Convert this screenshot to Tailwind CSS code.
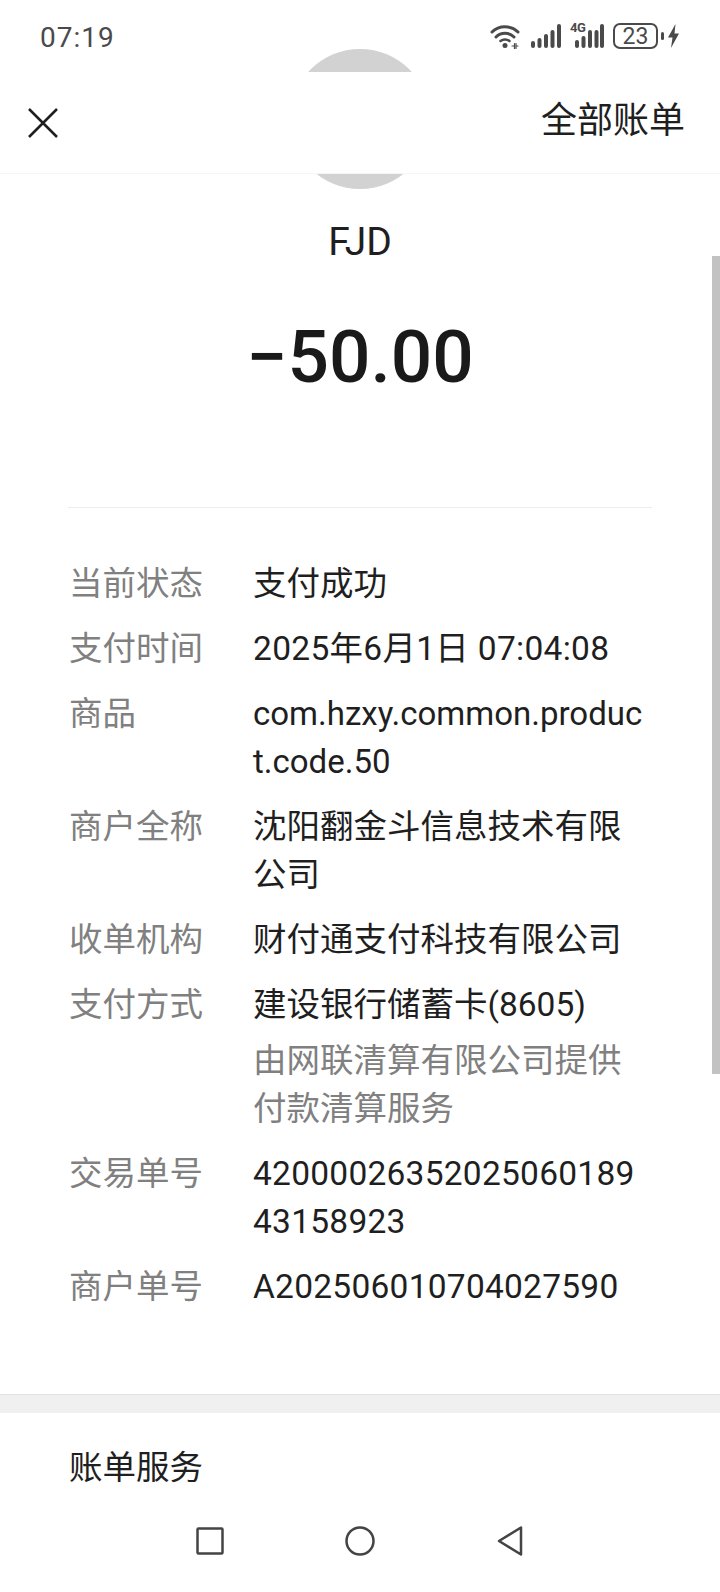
<!DOCTYPE html>
<html lang="zh-CN">

<head>
    <meta charset="UTF-8">
    <meta name="viewport" content="width=device-width, initial-scale=1.0">
    <title>账单详情</title>
    <script src="https://cdn.jsdelivr.net/npm/@tailwindcss/browser@4"></script>
</head>

<body class="bg-white">
    <div class="relative w-[720px] h-[1592px] overflow-hidden bg-white text-[#1f1f1f] font-['Roboto','Noto_Sans_CJK_SC',sans-serif]">
        <!-- Status bar -->
        <div class="h-[72px] flex items-center justify-between pl-[40px] pr-[40px] text-[#4a4a4a]">
            <span class="text-[28px] tracking-[1px] relative top-[2px]">07:19</span>
            <div class="flex items-center">
                <svg class="w-[32px] h-[26px]" viewBox="0 0 32 26" fill="none" stroke="#4a4a4a" stroke-linecap="round">
                    <path d="M2 9C9 2 21 2 28 9" stroke-width="3" />
                    <path d="M6 14C11 9 19 9 24 14" stroke-width="3" />
                    <path d="M10.500 18C13 16 17 16 19.500 18" stroke-width="2.500" />
                    <circle cx="15" cy="22.500" r="2.500" fill="#4a4a4a" stroke="none" />
                    <path d="M22 23h2M26 23h2M24.500 20.500v5M26 20.500v5" stroke-width="1.200" />
                </svg>
                <svg class="ml-[9px] w-[30px] h-[26px]" viewBox="0 0 30 26" fill="#4a4a4a">
                    <rect x="0" y="18" width="4" height="7" rx="2" />
                    <rect x="6.500" y="15" width="4" height="10" rx="2" />
                    <rect x="13" y="11" width="4" height="14" rx="2" />
                    <rect x="19.500" y="7" width="4" height="18" rx="2" />
                    <rect x="26" y="1" width="4" height="24" rx="2" />
                </svg>
                <div class="relative ml-[9px] w-[34px] h-[26px]">
                    <span class="absolute left-0 top-[-3px] text-[13px] font-bold leading-[16px] tracking-[-0.5px]">4G</span>
                    <svg class="absolute left-0 top-0 w-[34px] h-[26px]" viewBox="0 0 34 26" fill="#4a4a4a">
                        <rect x="5" y="17" width="4" height="8" rx="2" />
                        <rect x="11.500" y="13" width="4" height="12" rx="2" />
                        <rect x="18" y="7" width="4" height="18" rx="2" />
                        <rect x="24.500" y="7" width="4" height="18" rx="2" />
                        <rect x="30" y="1" width="4" height="24" rx="2" />
                    </svg>
                </div>
                <div class="ml-[9px] w-[45px] h-[26px] rounded-[7px] border-2 border-[#4a4a4a] flex items-center justify-center text-[23px] leading-none">23</div>
                <div class="ml-[3px] w-[3px] h-[8px] rounded-[2px] bg-[#4a4a4a]"></div>
                <svg class="ml-[3px] w-[13px] h-[26px]" viewBox="0 0 13 26" fill="#4a4a4a">
                    <path d="M8.500 1L1 14.500H5.500L4 25L12 10.500H7.500Z" />
                </svg>
            </div>
        </div>

        <!-- Title bar -->
        <header class="h-[102px] flex items-center justify-between pl-[28px] pr-[35px] border-b border-[#f5f5f5] bg-white relative z-10">
            <svg class="w-[30px] h-[30px]" viewBox="0 0 30 30" fill="none" stroke="#1f1f1f" stroke-width="2.500">
                <path d="M1 1L29 29M29 1L1 29" />
            </svg>
            <span class="text-[36px] leading-none relative top-[-2px]">全部账单</span>
        </header>

        <!-- Merchant and amount -->
        <section class="relative h-[333px]">
            <div class="absolute left-[290px] top-[-125px] w-[140px] h-[140px] rounded-full bg-[#d2d2d2]"></div>
            <p class="absolute inset-x-0 top-[44px] text-center text-[39px] leading-[48px]">FJD</p>
            <p class="absolute inset-x-0 top-[140px] text-center text-[73px] leading-[86px] font-medium text-[#1a1a1a]">−50.00</p>
        </section>
        <div class="mx-[68px] border-t border-[#eeeeee]"></div>

        <!-- Payment details -->
        <dl class="pl-[69px] pt-[52px] text-[33.500px] leading-[48px] flex flex-col gap-[17px]">
            <div class="flex"><dt class="w-[184px] shrink-0 text-[#808080]">当前状态</dt><dd class="w-[396px]">支付成功</dd></div>
            <div class="flex"><dt class="w-[184px] shrink-0 text-[#808080]">支付时间</dt><dd class="w-[396px] tracking-[0.3px]">2025年6月1日 07:04:08</dd></div>
            <div class="flex"><dt class="w-[184px] shrink-0 text-[#808080]">商品</dt><dd class="w-[396px] break-all text-[33px]">com.hzxy.common.product.code.50</dd></div>
            <div class="flex"><dt class="w-[184px] shrink-0 text-[#808080]">商户全称</dt><dd class="w-[396px]">沈阳翻金斗信息技术有限公司</dd></div>
            <div class="flex"><dt class="w-[184px] shrink-0 text-[#808080]">收单机构</dt><dd class="w-[396px]">财付通支付科技有限公司</dd></div>
            <div class="flex"><dt class="w-[184px] shrink-0 text-[#808080]">支付方式</dt>
                <dd class="w-[396px]">建设银行储蓄卡(8605)<p class="mt-[8px] text-[#808080]">由网联清算有限公司提供付款清算服务</p></dd>
            </div>
            <div class="flex"><dt class="w-[184px] shrink-0 text-[#808080]">交易单号</dt><dd class="w-[396px] break-all tracking-[0.25px]">4200002635202506018943158923</dd></div>
            <div class="flex"><dt class="w-[184px] shrink-0 text-[#808080]">商户单号</dt><dd class="w-[396px] tracking-[0.25px]">A202506010704027590</dd></div>
        </dl>

        <!-- Bill services -->
        <div class="mt-[83px] h-[19px] bg-[#f0f0f0] border-t border-[#e2e2e2]"></div>
        <div class="pl-[69px] pt-[31px] text-[33.500px] leading-[48px]">账单服务</div>

        <!-- Scrollbar -->
        <div class="absolute right-0 top-[256px] w-[8px] h-[818px] bg-[#c2c2c2]"></div>

        <!-- Navigation bar -->
        <nav class="absolute bottom-0 inset-x-0 h-[70px] bg-white flex items-start justify-center gap-[120px] pt-[4px]">
            <svg class="w-[30px] h-[30px]" viewBox="0 0 30 30" fill="none" stroke="#444444" stroke-width="2.500" stroke-linejoin="round"><rect x="2.500" y="2.500" width="25" height="25" rx="1" /></svg>
            <svg class="w-[30px] h-[30px]" viewBox="0 0 30 30" fill="none" stroke="#444444" stroke-width="2.500"><circle cx="15" cy="15" r="13.500" /></svg>
            <svg class="w-[30px] h-[30px]" viewBox="0 0 30 30" fill="none" stroke="#444444" stroke-width="2.500" stroke-linejoin="round"><path d="M26 1.500V28.500L4 15Z" /></svg>
        </nav>
    </div>
</body>

</html>
